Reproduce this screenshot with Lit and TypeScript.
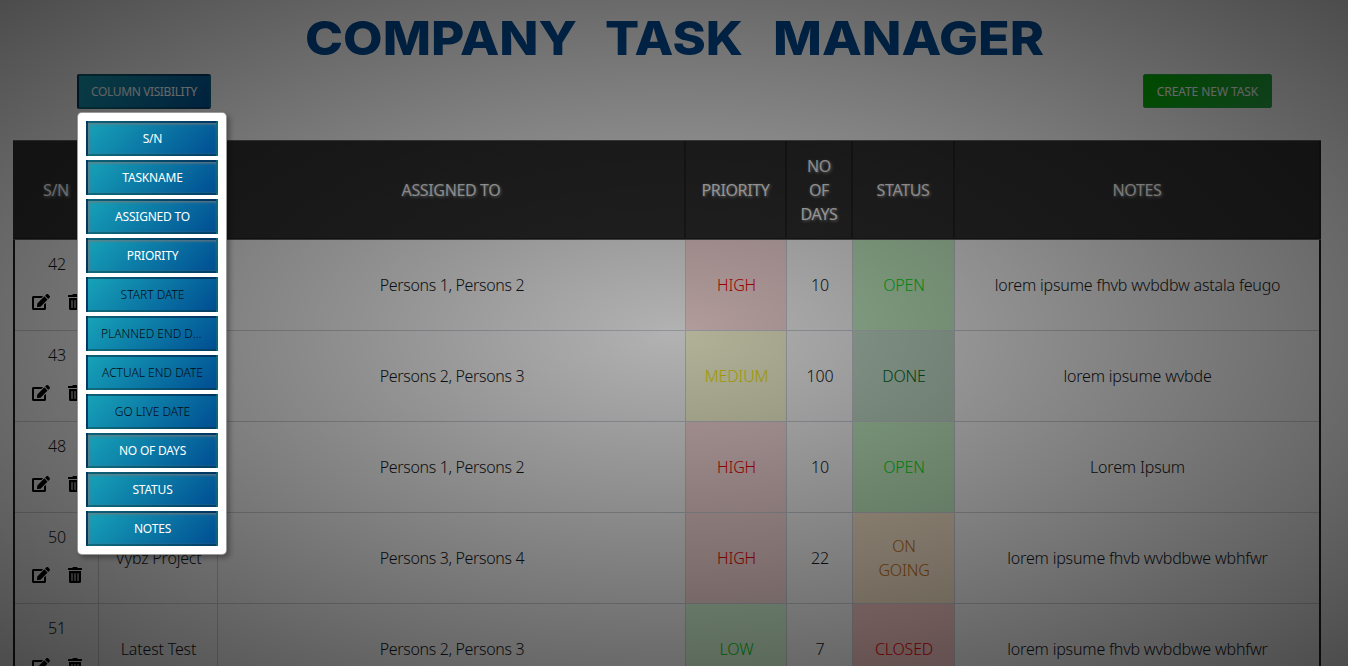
import { LitElement, html, css, svg } from "lit";
import { customElement, property } from "lit/decorators.js";
import { classMap } from "lit/directives/class-map.js";

interface Task {
  id: number;
  name: string;
  people: string;
  priority: string;
  days: number;
  status: string;
  notes: string;
}

const TASKS: Task[] = [
  { id: 42, name: "", people: "Persons 1, Persons 2", priority: "HIGH", days: 10, status: "OPEN", notes: "lorem ipsume fhvb wvbdbw astala feugo" },
  { id: 43, name: "", people: "Persons 2, Persons 3", priority: "MEDIUM", days: 100, status: "DONE", notes: "lorem ipsume wvbde" },
  { id: 48, name: "", people: "Persons 1, Persons 2", priority: "HIGH", days: 10, status: "OPEN", notes: "Lorem Ipsum" },
  { id: 50, name: "Vybz Project", people: "Persons 3, Persons 4", priority: "HIGH", days: 22, status: "ON GOING", notes: "lorem ipsume fhvb wvbdbwe wbhfwr" },
  { id: 51, name: "Latest Test", people: "Persons 2, Persons 3", priority: "LOW", days: 7, status: "CLOSED", notes: "lorem ipsume fhvb wvbdbwe wbhfwr" },
];

const COLUMNS: [string, boolean][] = [
  ["S/N", true],
  ["TASKNAME", true],
  ["ASSIGNED TO", true],
  ["PRIORITY", true],
  ["START DATE", false],
  ["PLANNED END DATE", false],
  ["ACTUAL END DATE", false],
  ["GO LIVE DATE", false],
  ["NO OF DAYS", true],
  ["STATUS", true],
  ["NOTES", true],
];

const HEADERS = ["S/N", "", "ASSIGNED TO", "PRIORITY", "NO OF DAYS", "STATUS", "NOTES"];

@customElement("column-menu")
export class ColumnMenu extends LitElement {
  static styles = css`
    :host {
      display: block;
      box-sizing: border-box;
      width: 150px;
      padding: 8px 8px 4px;
      border: 1px solid rgba(0, 0, 0, 0.4);
      border-radius: 5px;
      background: #fff;
      box-shadow: 3px 3px 5px rgba(0, 0, 0, 0.3);
    }
    .item {
      box-sizing: border-box;
      height: 35px;
      margin-bottom: 4px;
      padding: 0 12px 0 13px;
      border: 2px solid rgba(0, 0, 0, 0.33);
      background: linear-gradient(135deg, #17a2b8, #004e92);
      color: #040c12;
      font-size: 12px;
      line-height: 31px;
      letter-spacing: 0;
      text-align: center;
      white-space: nowrap;
      overflow: hidden;
      text-overflow: ellipsis;
    }
    .on {
      color: #fff;
      font-weight: 400;
      letter-spacing: -0.2px;
      box-shadow: inset 1px 1px 3px #777;
    }
  `;
  render() {
    return COLUMNS.map(
      ([name, on]) => html`<div class=${classMap({ item: true, on })}>${name}</div>`
    );
  }
}

@customElement("task-row")
export class TaskRow extends LitElement {
  @property({ attribute: false }) task!: Task;
  static styles = css`
    :host {
      display: grid;
      grid-template-columns: 84px 119px 468px 101px 66px 102px 364px;
      height: 91px;
    }
    .cell {
      display: flex;
      align-items: center;
      justify-content: center;
      text-align: center;
      box-sizing: border-box;
      border-right: 1px solid #cfd4da;
      border-bottom: 1px solid #cfd4da;
      padding: 0 19px 0 20px;
      letter-spacing: -0.18px;
    }
    .cell:last-child { border-right: 0; }
    .people { letter-spacing: -0.35px; }
    .sn { flex-direction: column; justify-content: flex-start; gap: 18px; padding: 12px 0 0 1px; }
    .tools { display: flex; gap: 18px; height: 16px; padding-right: 1px; }
    .tight { padding: 0 4px 0 5px; }
    .high { background: #ffdfdf; color: #f00000; }
    .medium { background: #ffffda; color: #f0e800; }
    .low { background: #dcffdc; color: #00d010; }
    .open { background: #c8f4c8; color: #00e020; }
    .done { background: #c8e2cf; color: #006c20; }
    .going { background: #ffebd0; color: #c07010; }
    .closed { background: #ffcccc; color: #f00000; }
  `;
  render() {
    const t = this.task;
    const status = t.status === "ON GOING" ? "going" : t.status.toLowerCase();
    return html`
      <div class="cell sn">
        <span>${t.id}</span>
        <span class="tools">
          <svg width="18" height="16" viewBox="0 0 576 512"><path d="M402.600 83.200l90.200 90.200c3.800 3.800 3.800 10 0 13.800L274.400 405.600l-92.800 10.300c-12.400 1.400-22.900-9.100-21.500-21.500l10.300-92.800L388.800 83.200c3.800-3.800 10-3.800 13.800 0zm162-22.900l-48.800-48.800c-15.200-15.200-39.900-15.200-55.200 0l-35.400 35.400c-3.800 3.800-3.800 10 0 13.800l90.200 90.200c3.800 3.800 10 3.800 13.800 0l35.400-35.400c15.200-15.300 15.200-40 0-55.200zM384 346.200V448H64V128h229.800c3.200 0 6.200-1.300 8.500-3.500l40-40c7.600-7.600 2.200-20.500-8.500-20.500H48C21.500 64 0 85.500 0 112v352c0 26.500 21.500 48 48 48h352c26.500 0 48-21.500 48-48V306.200c0-10.700-12.900-16-20.500-8.500l-40 40c-2.200 2.300-3.500 5.300-3.500 8.500z"/></svg>
          <svg width="14" height="16" viewBox="0 0 448 512"><path d="M32 464a48 48 0 0 0 48 48h288a48 48 0 0 0 48-48V128H32zm272-256a16 16 0 0 1 32 0v224a16 16 0 0 1-32 0zm-96 0a16 16 0 0 1 32 0v224a16 16 0 0 1-32 0zm-96 0a16 16 0 0 1 32 0v224a16 16 0 0 1-32 0zM432 32H312l-9.400-18.700A24 24 0 0 0 281.100 0H166.800a23.700 23.700 0 0 0-21.400 13.300L136 32H16A16 16 0 0 0 0 48v32a16 16 0 0 0 16 16h416a16 16 0 0 0 16-16V48a16 16 0 0 0-16-16z"/></svg>
        </span>
      </div>
      <div class="cell tight">${t.name}</div>
      <div class="cell people">${t.people}</div>
      <div class="cell tight ${t.priority.toLowerCase()}">${t.priority}</div>
      <div class="cell tight">${t.days}</div>
      <div class="cell ${status}">${t.status}</div>
      <div class="cell">${t.notes}</div>
    `;
  }
}

@customElement("app-root")
export class AppRoot extends LitElement {
  static styles = css`
    :host {
      display: block;
      position: relative;
      width: 1348px;
      height: 666px;
      overflow: hidden;
      background: #fff;
      color: #15181b;
      font: 300 16px/24px "Noto Sans", "Open Sans", sans-serif;
    }
    .title { display: block; height: 74px; }
    .title text {
      font: 800 47px "Inter", sans-serif;
      fill: #004a94;
    }
    .bar {
      display: flex;
      justify-content: space-between;
      height: 66px;
      padding: 0 76px 0 77px;
      box-sizing: border-box;
      align-items: flex-start;
    }
    .btn {
      box-sizing: border-box;
      border: 2px solid rgba(0, 0, 0, 0.33);
      border-radius: 2px;
      color: #fff;
      font-size: 12px;
      font-weight: 400;
      text-align: center;
      letter-spacing: -0.38px;
    }
    .cols {
      width: 134px;
      height: 35px;
      line-height: 31px;
      background: linear-gradient(135deg, #17a2b8, #004e92);
    }
    .create {
      width: 129px;
      height: 34px;
      line-height: 33px;
      letter-spacing: -0.08px;
      border: 1px solid #28a745;
      background: linear-gradient(120deg, #00b400, #28a745);
    }
    .table { margin: 0 27px 0 13px; }
    .head {
      display: grid;
      grid-template-columns: 86px 119px 468px 101px 66px 102px 366px;
      box-sizing: border-box;
      height: 100px;
      background: #303030;
      border-top: 1px solid #606468;
      border-bottom: 1px solid #606468;
      color: #fff;
      font-weight: 400;
      letter-spacing: -0.36px;
      text-shadow: 1px 1px 3px #aaa;
    }
    .th {
      display: flex;
      align-items: center;
      justify-content: center;
      text-align: center;
      box-sizing: border-box;
      padding: 1px 11px 0 11px;
      border-right: 2px solid #222;
      border-bottom: 1px solid #222;
    }
    .th:first-child { padding-left: 13px; }
    .rows { border: solid #222; border-width: 0 2px; }
    .shade {
      position: absolute;
      inset: 0;
      background: radial-gradient(ellipse farthest-corner at center, rgba(0, 0, 0, 0.3) 0%, rgba(0, 0, 0, 0.7) 100%);
    }
    .menu { position: absolute; left: 77px; top: 112px; }
  `;
  render() {
    const words: [string, number, number][] = [["COMPANY", 305, 272], ["TASK", 605, 138], ["MANAGER", 773, 271]];
    return html`
      <svg class="title" width="1348" height="74">
        ${words.map(([w, x, len]) => svg`<text x=${x} y="55" textLength=${len} lengthAdjust="spacingAndGlyphs">${w}</text>`)}
      </svg>
      <div class="bar">
        <div class="btn cols">COLUMN VISIBILITY</div>
        <div class="btn create">CREATE NEW TASK</div>
      </div>
      <div class="table">
        <div class="head">${HEADERS.map((h) => html`<div class="th">${h}</div>`)}</div>
        <div class="rows">${TASKS.map((t) => html`<task-row .task=${t}></task-row>`)}</div>
      </div>
      <div class="shade"></div>
      <column-menu class="menu"></column-menu>
    `;
  }
}
